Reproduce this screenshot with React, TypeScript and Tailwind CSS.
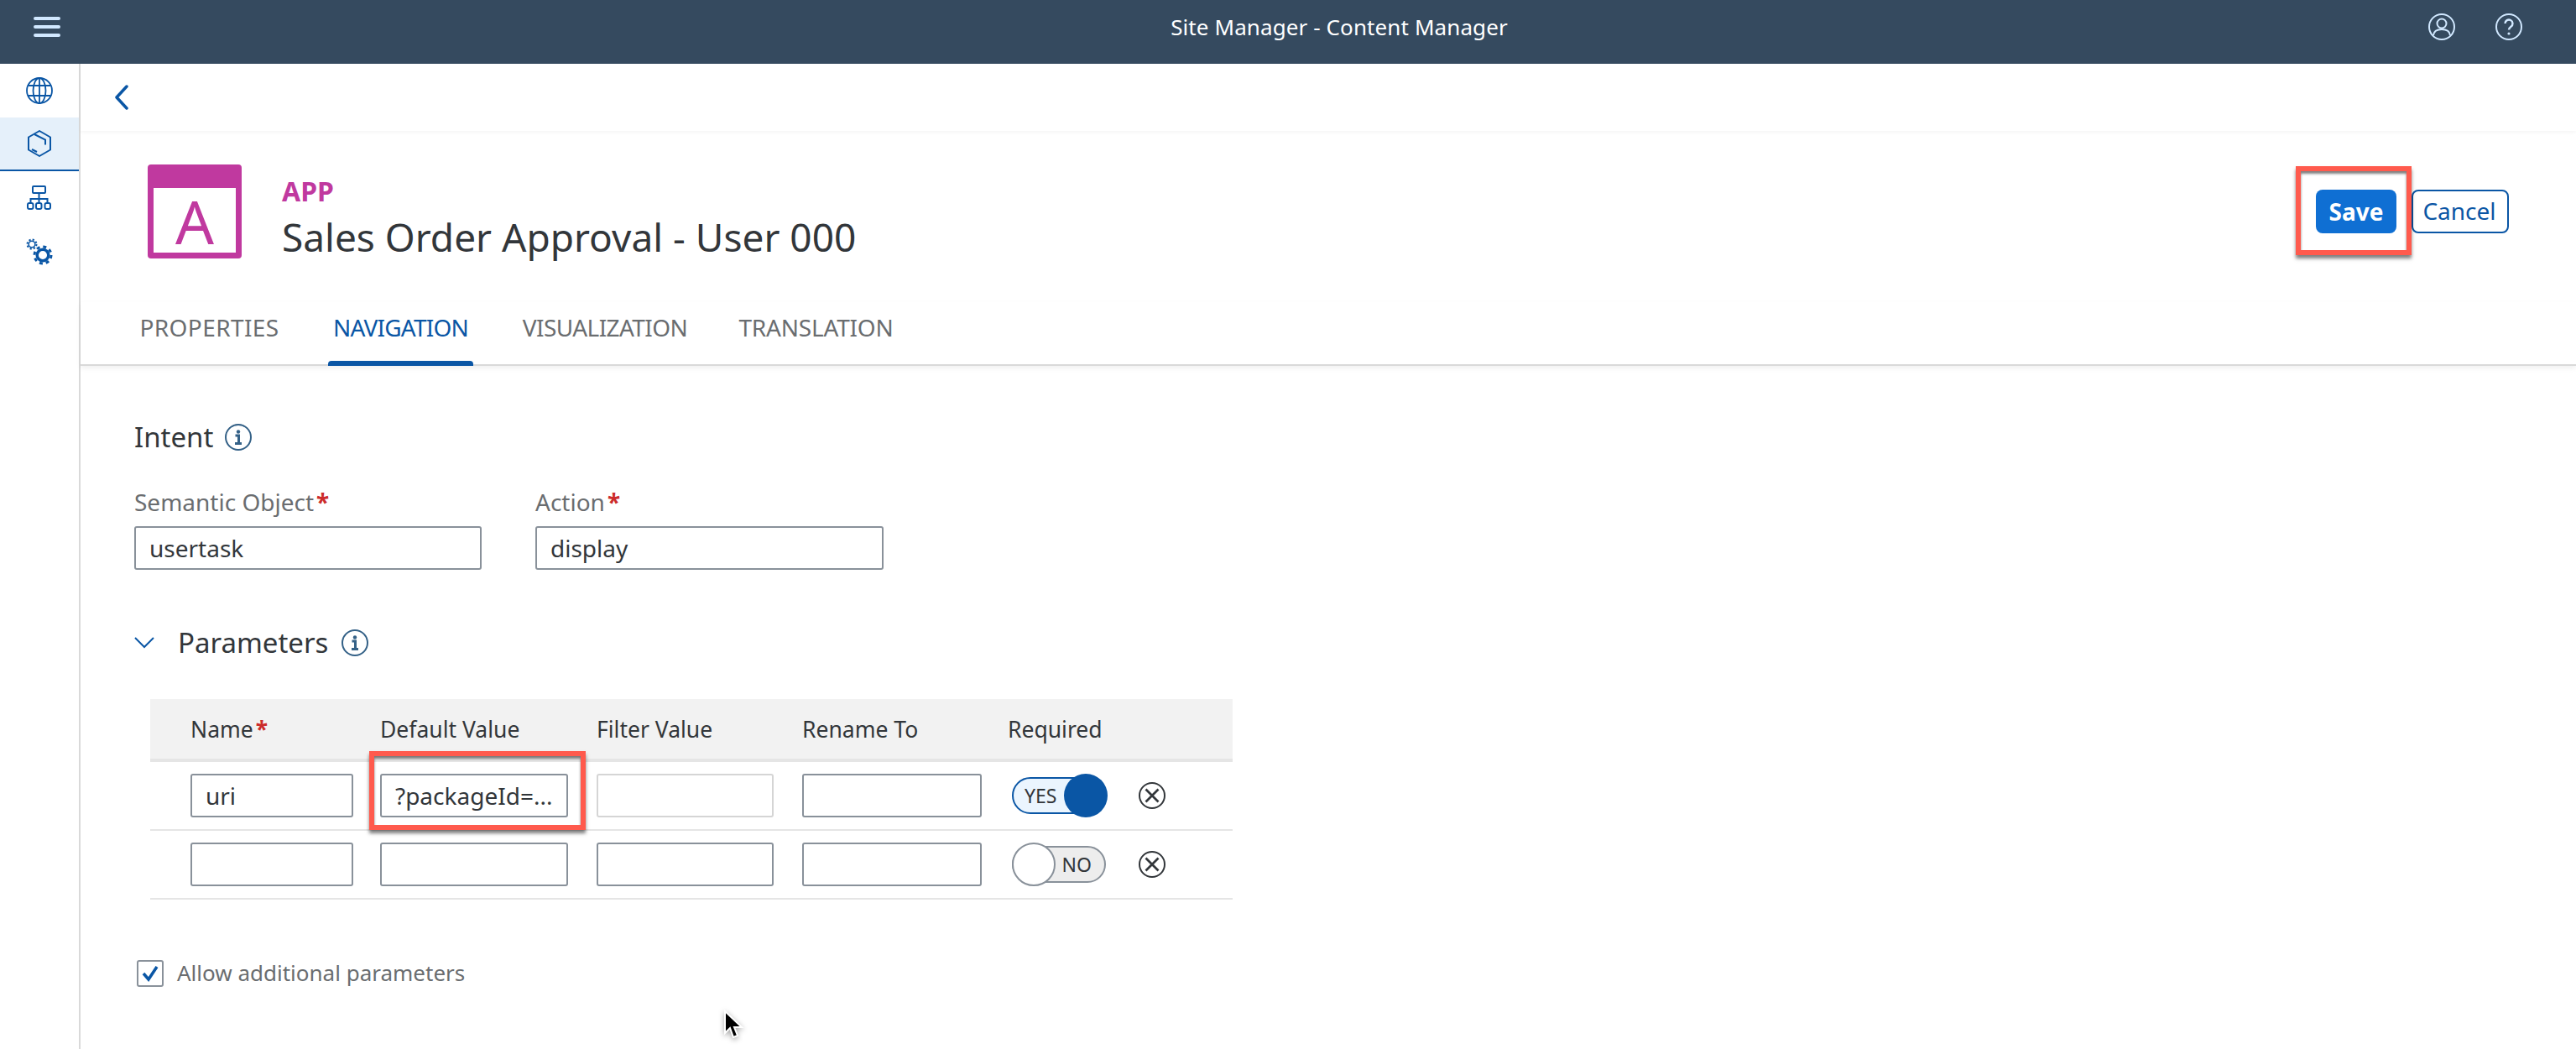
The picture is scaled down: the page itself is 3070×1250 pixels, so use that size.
import React from "react";

const rowGrid = "grid grid-cols-[226px_258px_245px_250px_151px_auto] items-center pl-[48px]";
const inputClass = "h-[52px] rounded-[3px] border-2 border-[#89919a] bg-white px-[16px] text-[28px] text-[#32363a] outline-none";

function Globe() {
  return (
    <svg width="32" height="32" viewBox="0 0 32 32" fill="none" stroke="#0a56a5" strokeWidth="1.800">
      <circle cx="16" cy="16" r="15" />
      <ellipse cx="16" cy="16" rx="7.500" ry="15" />
      <path d="M16 1v30M3 10h26M3 22h26" />
    </svg>
  );
}

function BoxIcon() {
  return (
    <svg width="30" height="32" viewBox="0 0 30 32" fill="none" stroke="#0a56a5" strokeWidth="2">
      <path d="M15 1l13 7.500v15L15 31 2 23.500V8.500z" strokeLinejoin="round" />
      <path d="M9 5l13 6.500v6M6 23l6 3" />
    </svg>
  );
}

function OrgIcon() {
  return (
    <svg width="30" height="30" viewBox="0 0 30 30" fill="none" stroke="#0a56a5" strokeWidth="2">
      <rect x="7" y="1" width="15" height="8" rx="1" />
      <path d="M14.500 9v12M4.500 21v-5h20v5" />
      <rect x="1" y="21" width="6.500" height="7" rx="2" />
      <rect x="11" y="21" width="6.500" height="7" rx="2" />
      <rect x="21.500" y="21" width="6.500" height="7" rx="2" />
    </svg>
  );
}

function GearIcon() {
  return (
    <svg width="34" height="34" viewBox="0 0 34 34" fill="none" stroke="#0a56a5">
      <circle cx="8" cy="8" r="3.800" strokeWidth="1.500" />
      <circle cx="8" cy="8" r="5.500" strokeWidth="2" strokeDasharray="2.200 2.120" />
      <circle cx="21" cy="21" r="6.800" strokeWidth="3.500" />
      <circle cx="21" cy="21" r="10" strokeWidth="3" strokeDasharray="4 3.850" />
    </svg>
  );
}

function UserIcon() {
  return (
    <svg width="32" height="32" viewBox="0 0 32 32" fill="none" stroke="#d1e8ff" strokeWidth="2">
      <circle cx="16" cy="16" r="15" />
      <circle cx="16" cy="12" r="5.500" />
      <path d="M6 26c.5-5 4-7 10-7s9.500 2 10 7" />
    </svg>
  );
}

function HelpIcon() {
  return (
    <svg width="32" height="32" viewBox="0 0 32 32" fill="none" stroke="#d1e8ff" strokeWidth="2">
      <circle cx="16" cy="16" r="15" />
      <path d="M11.500 12a4.500 4.500 0 1 1 7 3.700c-1.700 1.200-2.500 2-2.500 3.800" strokeWidth="2.400" />
      <circle cx="16" cy="24" r="1.600" fill="#d1e8ff" stroke="none" />
    </svg>
  );
}

function InfoIcon() {
  return (
    <svg width="32" height="32" viewBox="0 0 32 32" fill="none" stroke="#346187" strokeWidth="2">
      <circle cx="16" cy="16" r="15" />
      <path d="M12.500 14h4v9M12 23.500h8" strokeWidth="3" />
      <circle cx="16" cy="9.500" r="2.200" fill="#346187" stroke="none" />
    </svg>
  );
}

function RemoveIcon() {
  return (
    <svg width="32" height="32" viewBox="0 0 32 32" fill="none" stroke="#32363a" strokeWidth="2">
      <circle cx="16" cy="16" r="15" />
      <path d="M8.500 8.500l15 15M23.500 8.500l-15 15" strokeWidth="2.800" />
    </svg>
  );
}

function Required() {
  return <span className="ml-[3px] font-bold text-[#cc2b2b]">*</span>;
}

export default function App() {
  return (
    <div className="relative flex h-[1250px] w-[3070px] flex-col overflow-hidden bg-white font-['Noto_Sans',sans-serif] text-[#32363a]">
      {/* Shell bar */}
      <header className="flex h-[76px] shrink-0 items-center bg-[#354a5f] pb-[12px] pl-[40px] pr-[64px]">
        <div className="flex w-[32px] flex-col gap-[6px]">
          <div className="h-[4px] rounded-full bg-[#d1e8ff]" />
          <div className="h-[4px] rounded-full bg-[#d1e8ff]" />
          <div className="h-[4px] rounded-full bg-[#d1e8ff]" />
        </div>
        <div className="flex-1 pl-[226px] text-center text-[26px] tracking-[0.1px] text-white">Site Manager - Content Manager</div>
        <div className="flex gap-[48px]">
          <UserIcon />
          <HelpIcon />
        </div>
      </header>

      <div className="flex flex-1">
        {/* Sidebar */}
        <aside className="flex w-[96px] shrink-0 flex-col border-r-2 border-[#d9d9d9]">
          <div className="flex h-[64px] items-center justify-center">
            <Globe />
          </div>
          <div className="flex h-[64px] items-center justify-center border-b-2 border-[#0a56a5] bg-[#e5f0fa]">
            <BoxIcon />
          </div>
          <div className="flex h-[64px] items-center justify-center">
            <OrgIcon />
          </div>
          <div className="flex h-[64px] items-center justify-center">
            <GearIcon />
          </div>
        </aside>

        {/* Main Content */}
        <main className="flex flex-1 flex-col">
          <div className="flex h-[80px] shrink-0 items-center pl-[40px] shadow-[0_2px_4px_rgba(0,0,0,0.04)]">
            <svg width="18" height="30" viewBox="0 0 18 30" fill="none" stroke="#0a56a5" strokeWidth="3.500" strokeLinecap="round" strokeLinejoin="round">
              <path d="M15 2L3 15l12 13" />
            </svg>
          </div>

          <div className="flex items-start pl-[80px] pr-[80px] pt-[40px]">
            <div className="flex h-[112px] w-[112px] shrink-0 items-center justify-center rounded-[4px] border-[7px] border-t-[28px] border-[#c0399f] bg-white text-[72px] leading-none text-[#c0399f]">
              A
            </div>
            <div className="ml-[48px] flex-1">
              <div className="mt-[14px] text-[32px] font-bold leading-[36px] text-[#c0399f]">APP</div>
              <div className="mt-[10px] text-[46px] leading-[52px]">Sales Order Approval - User 000</div>
            </div>
            <div className="mt-[30px] flex">
              <div className="relative mr-[18px] flex h-[52px] w-[96px] items-center justify-center rounded-[8px] bg-[#0f6fd3] text-[28px] font-bold text-white">
                Save
                <div className="absolute -bottom-[26px] -left-[24px] -right-[18px] -top-[28px] border-[6px] border-[#ff5a4d] shadow-[0_4px_4px_rgba(0,0,0,0.5),inset_0_3px_3px_rgba(0,0,0,0.5)]" />
              </div>
              <div className="flex h-[52px] w-[116px] items-center justify-center rounded-[8px] border-2 border-[#0a56a5] pb-[2px] pr-[2px] text-[28px] text-[#0a56a5]">
                Cancel
              </div>
            </div>
          </div>

          {/* Tabs */}
          <div className="mt-[52px] flex h-[76px] shrink-0 gap-[53px] border-b-2 border-[#d9d9d9] pl-[65px] text-[28px] text-[#6a6d70] shadow-[0_3px_6px_rgba(0,0,0,0.06)]">
            <div className="flex w-[177px] flex-col items-center justify-end">
              <span className="mb-[23px] tracking-[0.4px]">PROPERTIES</span>
            </div>
            <div className="-mb-[2px] flex w-[173px] flex-col items-center justify-end text-[#0a56a5]">
              <span className="mb-[19px] tracking-[-0.8px]">NAVIGATION</span>
              <div className="h-[6px] w-full rounded-t-[4px] bg-[#0a56a5]" />
            </div>
            <div className="flex w-[208px] flex-col items-center justify-end">
              <span className="mb-[23px] tracking-[-0.6px]">VISUALIZATION</span>
            </div>
            <div className="flex w-[189px] flex-col items-center justify-end">
              <span className="mb-[23px] tracking-[-0.2px]">TRANSLATION</span>
            </div>
          </div>

          {/* Form */}
          <div className="flex flex-col pl-[64px]">
            <div className="mt-[64px] flex h-[41px] items-center gap-[14px] text-[33px]">
              Intent
              <InfoIcon />
            </div>
            <div className="mt-[38px] flex gap-[64px] text-[28px] text-[#6a6d70]">
              <div className="flex w-[414px] flex-col gap-[10px]">
                <label className="leading-[38px]">
                  Semantic Object
                  <Required />
                </label>
                <input readOnly value="usertask" className={inputClass} />
              </div>
              <div className="flex w-[415px] flex-col gap-[10px]">
                <label className="leading-[38px]">
                  Action
                  <Required />
                </label>
                <input readOnly value="display" className={inputClass} />
              </div>
            </div>

            <div className="mt-[67px] flex h-[40px] items-center text-[33px]">
              <svg width="24" height="14" viewBox="0 0 24 14" fill="none" stroke="#0a56a5" strokeWidth="2">
                <path d="M1 1l11 11L23 1" />
              </svg>
              <span className="ml-[28px]">Parameters</span>
              <span className="ml-[16px]">
                <InfoIcon />
              </span>
            </div>

            {/* Parameters table */}
            <div className="ml-[19px] mt-[47px] w-[1290px]">
              <div className={`${rowGrid} h-[75px] border-b-4 border-[#e5e5e5] bg-[#f2f2f2] pt-[2px] text-[26.5px]`}>
                <div>
                  Name
                  <Required />
                </div>
                <div>Default Value</div>
                <div>Filter Value</div>
                <div>Rename To</div>
                <div className="-ml-[5px]">Required</div>
              </div>

              <div className={`${rowGrid} h-[82px] border-b-2 border-[#e5e5e5]`}>
                <input readOnly value="uri" className={`${inputClass} w-[194px]`} />
                <div className="relative w-[224px]">
                  <input readOnly value="?packageId=..." className={`${inputClass} w-full`} />
                  <div className="absolute -bottom-[15px] -left-[13px] -right-[21px] -top-[27px] border-[6px] border-[#ff5a4d] shadow-[0_4px_4px_rgba(0,0,0,0.5),inset_0_3px_3px_rgba(0,0,0,0.5)]" />
                </div>
                <input readOnly className={`${inputClass} w-[211px] border-[#d5d5d5]`} />
                <input readOnly className={`${inputClass} w-[214px]`} />
                <div className="relative flex h-[44px] w-[110px] items-center rounded-full border-2 border-[#0a56a5] bg-[#ebf5fe] pl-[13px] text-[23px]">
                  YES
                  <div className="absolute -right-[6px] -top-[6px] h-[52px] w-[52px] rounded-full bg-[#0a56a5]" />
                </div>
                <RemoveIcon />
              </div>

              <div className={`${rowGrid} h-[82px] border-b-2 border-[#e5e5e5]`}>
                <input readOnly className={`${inputClass} w-[194px]`} />
                <input readOnly className={`${inputClass} w-[224px]`} />
                <input readOnly className={`${inputClass} w-[211px]`} />
                <input readOnly className={`${inputClass} w-[214px]`} />
                <div className="relative flex h-[44px] w-[112px] items-center justify-end rounded-full border-2 border-[#89919a] bg-[#ededed] pr-[15px] text-[23px]">
                  NO
                  <div className="absolute -left-[2px] -top-[6px] h-[52px] w-[52px] rounded-full border-2 border-[#89919a] bg-white" />
                </div>
                <RemoveIcon />
              </div>
            </div>

            <div className="ml-[3px] mt-[68px] flex items-center gap-[16px] text-[26px] text-[#6a6d70]">
              <div className="flex h-[32px] w-[32px] items-center justify-center rounded-[3px] border-2 border-[#89919a]">
                <svg width="20" height="20" viewBox="0 0 20 20" fill="none" stroke="#0a56a5" strokeWidth="3.500">
                  <path d="M2 10l6 7L18 2" />
                </svg>
              </div>
              Allow additional parameters
            </div>
          </div>
        </main>
      </div>

      {/* Mouse pointer */}
      <svg className="absolute left-[861px] top-[1203px] drop-shadow-[0_2px_3px_rgba(0,0,0,0.35)]" width="26" height="36" viewBox="0 0 26 36">
        <path d="M3 2v26l6-6 4 11 5-2-4-10h9z" fill="#000" stroke="#fff" strokeWidth="2" />
      </svg>
    </div>
  );
}
